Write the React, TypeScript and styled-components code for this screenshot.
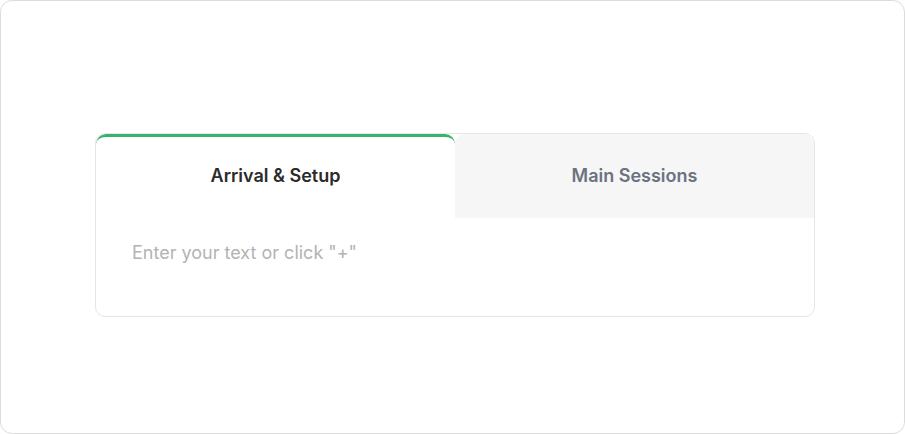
import styled, { createGlobalStyle } from "styled-components";
import { useState } from "react";

const Global = createGlobalStyle`
  html, body { margin: 0; padding: 0; background: #fff; }
  * { box-sizing: border-box; }
  body { font-family: Inter, "Noto Sans", sans-serif; }
`;

const Frame = styled.div`
  width: 905px;
  height: 434px;
  border: 1px solid #dcdcdc;
  border-radius: 12px;
  background: #fff;
  padding: 132px 0 0 94px;
`;

const Card = styled.div`
  width: 720px;
  height: 184px;
  border: 1px solid #e6e6e6;
  border-radius: 10px;
  display: flex;
  flex-direction: column;
  overflow: hidden;
`;

const TabBar = styled.div`
  display: grid;
  grid-template-columns: 1fr 1fr;
  height: 84px;
`;

const Tab = styled.button<{ $active?: boolean }>`
  border: none;
  margin: 0;
  padding: 0 0 5px;
  font-family: Inter, "Noto Sans", sans-serif;
  font-size: 18px;
  font-weight: 600;
  cursor: pointer;
  color: ${({ $active }) => ($active ? "#2b2b2b" : "#6b7280")};
  background: ${({ $active }) => ($active ? "#fff" : "#f6f6f6")};
  border-top: 3px solid ${({ $active }) => ($active ? "#3bb26b" : "transparent")};
  border-radius: 10px 10px 0 0;
`;

const Body = styled.div`
  flex: 1;
  padding: 24px 36px;
  font-size: 18px;
  color: #b3b3b3;
`;

export default function App() {
  const [active, setActive] = useState(0);
  const tabs = ["Arrival & Setup", "Main Sessions"];
  return (
    <>
      <Global />
      <Frame>
        <Card>
          <TabBar>
            {tabs.map((t, i) => (
              <Tab key={t} $active={active === i} onClick={() => setActive(i)}>
                {t}
              </Tab>
            ))}
          </TabBar>
          <Body>Enter your text or click "+"</Body>
        </Card>
      </Frame>
    </>
  );
}
